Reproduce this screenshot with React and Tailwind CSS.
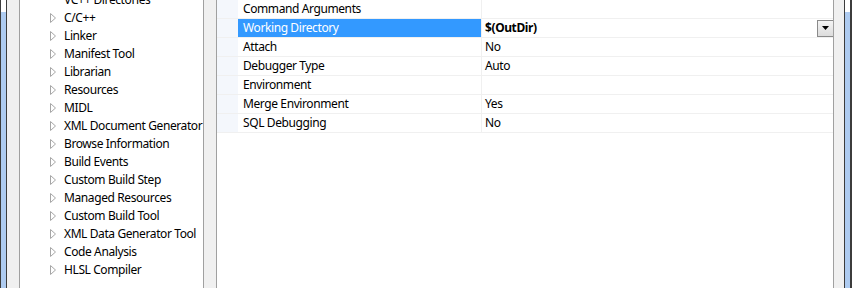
export default function App() {
  const tree = [
    ["VC++ Directories", false],
    ["C/C++", true],
    ["Linker", true],
    ["Manifest Tool", true],
    ["Librarian", true],
    ["Resources", true],
    ["MIDL", true],
    ["XML Document Generator", true],
    ["Browse Information", true],
    ["Build Events", true],
    ["Custom Build Step", true],
    ["Managed Resources", true],
    ["Custom Build Tool", true],
    ["XML Data Generator Tool", true],
    ["Code Analysis", true],
    ["HLSL Compiler", true],
  ];
  const rows = [
    ["Command Arguments", ""],
    ["Working Directory", "$(OutDir)"],
    ["Attach", "No"],
    ["Debugger Type", "Auto"],
    ["Environment", ""],
    ["Merge Environment", "Yes"],
    ["SQL Debugging", "No"],
  ];
  return (
    <div
      className="flex w-[852px] h-[288px] overflow-hidden bg-white text-[12px] tracking-[-0.4px] text-black"
      style={{ fontFamily: '"Noto Sans", "Open Sans", sans-serif' }}
    >
      {/* left scroll edge */}
      <div className="w-px bg-[#3c3c3c]" />
      <div className="w-[5px] flex flex-col">
        <div className="h-[12px] bg-white" />
        <div className="flex-1 bg-[#aecbf0]" />
      </div>
      <div className="w-px bg-[#3c3c3c]" />
      <div className="w-[12px] bg-[#f0f0f0]" />
      <div className="w-px bg-[#a0a0a0]" />
      {/* tree */}
      <div className="w-[183px] bg-white">
        <div className="mt-[-9px] flex flex-col">
          {tree.map(([t, arrow]) => (
            <div key={t} className="h-[18px] leading-[18px] flex items-center whitespace-nowrap">
              <div className="w-[44px] shrink-0 flex justify-end pr-[8px]">
                {arrow && (
                  <svg width="6" height="10" viewBox="0 0 6 10">
                    <polygon points="0.5,0.5 5.5,5 0.5,9.5" fill="none" stroke="#a6a6a6" strokeWidth="1" />
                  </svg>
                )}
              </div>
              <span>{t}</span>
            </div>
          ))}
        </div>
      </div>
      <div className="w-px bg-[#a0a0a0]" />
      <div className="w-[12px] bg-[#f0f0f0]" />
      <div className="w-px bg-[#a0a0a0]" />
      {/* property grid */}
      <div className="w-[616px] bg-white">
        {rows.map(([n, v]) => {
          const sel = n === "Working Directory";
          return (
            <div key={n} className="flex h-[19px] border-b border-[#f0f0f0]">
              <div className="w-[21px] bg-[#f4f7fc]" />
              <div
                className={
                  "w-[244px] pl-[5px] leading-[18px] whitespace-nowrap border-r border-[#f0f0f0] " +
                  (sel ? "bg-[#3399ff] text-white" : "")
                }
              >
                {n}
              </div>
              <div className="flex-1 flex items-center pl-[3px] leading-[18px] whitespace-nowrap">
                <span className={sel ? "font-bold flex-1" : "flex-1"}>{v}</span>
                {sel && (
                  <div className="w-[17px] h-[17px] border border-[#8a8a8a] bg-gradient-to-b from-[#f4f4f4] to-[#dcdcdc] flex items-center justify-center mr-[-1px]">
                    <svg width="7" height="4" viewBox="0 0 7 4">
                      <polygon points="0,0 7,0 3.5,4" fill="#000" />
                    </svg>
                  </div>
                )}
              </div>
            </div>
          );
        })}
      </div>
      <div className="w-px bg-[#a0a0a0]" />
      <div className="w-[10px] bg-[#f0f0f0]" />
      <div className="w-px bg-[#3c3c3c]" />
      <div className="w-[5px] flex flex-col">
        <div className="h-[12px] bg-white" />
        <div className="flex-1 bg-[#aecbf0]" />
      </div>
      <div className="w-[2px] bg-[#3c3c3c]" />
    </div>
  );
}
